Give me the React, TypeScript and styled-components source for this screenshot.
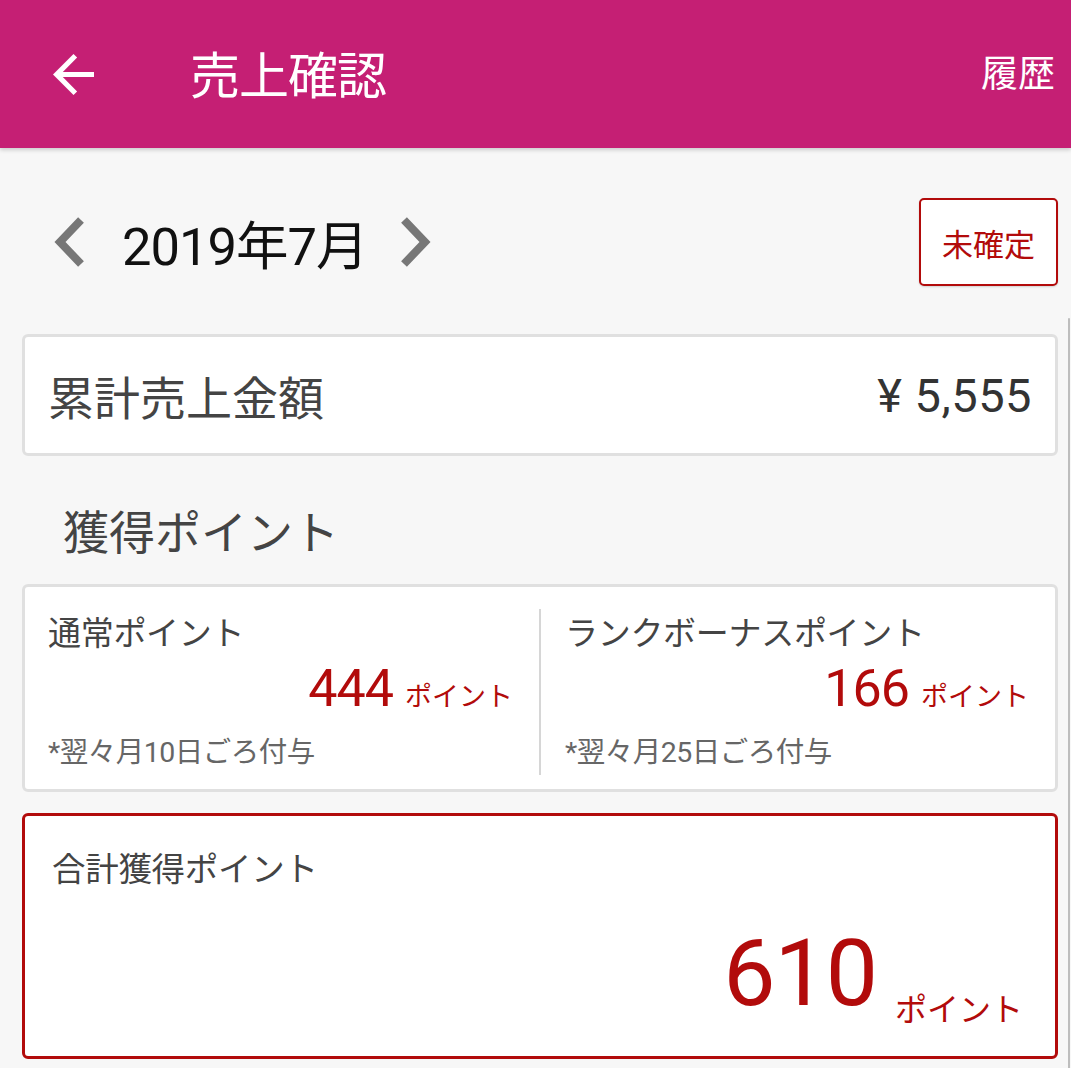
import React from "react";
import styled, { createGlobalStyle } from "styled-components";

const Global = createGlobalStyle`
  html, body { margin: 0; padding: 0; background: #f7f7f7; }
  body { font-family: Roboto, "Noto Sans CJK JP", sans-serif; }
  * { box-sizing: border-box; }
`;

const RED = "#b20b0b";

const Page = styled.div`
  width: 1071px;
  height: 1068px;
  overflow: hidden;
  background: #f7f7f7;
  position: relative;
`;

const Header = styled.header`
  height: 148px;
  background: #c51f74;
  display: flex;
  align-items: center;
  padding: 0 16px 0 53px;
  color: #fff;
  box-shadow: 0 2px 4px rgba(0, 0, 0, 0.18);
  position: relative;
`;

const BackIcon = styled.svg`
  width: 41px;
  height: 41px;
  flex: none;
  margin-bottom: 0;
`;

const Title = styled.h1`
  margin: 0 0 4px 96px;
  font-size: 50px;
  font-weight: 400;
  flex: 1;
  letter-spacing: -1px;
`;

const HeaderAction = styled.span`
  font-size: 37px;
  margin-bottom: 6px;
`;

const Content = styled.main`
  padding: 50px 13px 0 22px;
  display: flex;
  flex-direction: column;
`;

const DateRow = styled.div`
  display: flex;
  align-items: center;
  height: 88px;
`;

const Chevron = styled.svg<{ $gap: number }>`
  width: 36px;
  height: 52px;
  flex: none;
  margin-left: ${(p) => p.$gap}px;
  filter: blur(0.6px);
`;

const MonthLabel = styled.span`
  font-size: 52.5px;
  color: #111;
  margin-left: 35px;
  letter-spacing: -1px;
`;

const Spacer = styled.div`
  flex: 1;
`;

const StatusButton = styled.div`
  width: 139px;
  height: 88px;
  border: 2px solid ${RED};
  border-radius: 5px;
  background: #fff;
  color: ${RED};
  font-size: 31px;
  display: flex;
  align-items: center;
  justify-content: center;
  box-shadow: 0 1px 2px rgba(0, 0, 0, 0.15);
`;

const Card = styled.section<{ $accent?: boolean }>`
  background: #fff;
  border: 3px solid ${(p) => (p.$accent ? RED : "#e0e0e0")};
  border-radius: 6px;
`;

const TotalCard = styled(Card)`
  margin-top: 48px;
  height: 122px;
  display: flex;
  align-items: center;
  justify-content: space-between;
  padding: 0 23px 0 23px;
`;

const TotalLabel = styled.span`
  font-size: 46px;
  color: #444;
  letter-spacing: 0px;
`;

const TotalValue = styled.span`
  font-size: 47px;
  color: #333;
  letter-spacing: 0.5px;
`;

const SectionTitle = styled.h2`
  margin: 46px 0 20px 41px;
  font-size: 46px;
  font-weight: 400;
  color: #444;
  height: 62px;
  line-height: 62px;
`;

const PointsCard = styled(Card)`
  height: 208px;
  display: grid;
  grid-template-columns: 1fr 2px 1fr;
  align-items: stretch;
  padding: 22px 0;
`;

const Divider = styled.div`
  background: #d6d6d6;
`;

const PointCol = styled.div<{ $left?: boolean }>`
  display: flex;
  flex-direction: column;
  padding: 0 26px 0 ${(p) => (p.$left ? "23px" : "24px")};
`;

const PointLabel = styled.span`
  font-size: 33px;
  color: #444;
  line-height: 50px;
  letter-spacing: -0.3px;
`;

const ValueRow = styled.div<{ $lh: number }>`
  text-align: right;
  color: ${RED};
  line-height: ${(p) => p.$lh}px;
  white-space: nowrap;
`;

const BigNum = styled.span<{ $size: number }>`
  font-size: ${(p) => p.$size}px;
  letter-spacing: -1px;
`;

const Unit = styled.span<{ $size: number; $gap: number; $drop?: number }>`
  font-size: ${(p) => p.$size}px;
  margin-left: ${(p) => p.$gap}px;
  vertical-align: ${(p) => -(p.$drop || 0)}px;
`;

const Note = styled.span`
  font-size: 28.5px;
  color: #666;
  line-height: 44px;
  letter-spacing: -0.5px;
`;

const GrandCard = styled(Card)`
  margin-top: 21px;
  height: 246px;
  display: flex;
  flex-direction: column;
  padding: 30px 32px 0 27px;
`;

const GrandLabel = styled.span`
  font-size: 33.5px;
  color: #444;
  line-height: 48px;
  letter-spacing: -0.3px;
`;

const ScrollHint = styled.div`
  position: absolute;
  right: 1px;
  top: 318px;
  width: 2px;
  height: 760px;
  background: #bdbdbd;
  border-radius: 2px;
`;

export default function App() {
  return (
    <Page>
      <Global />
      <Header>
        <BackIcon viewBox="4 4 16 16">
          <path fill="#fff" d="M20 11H7.83l5.59-5.59L12 4l-8 8 8 8 1.41-1.41L7.83 13H20v-2z" />
        </BackIcon>
        <Title>売上確認</Title>
        <HeaderAction>履歴</HeaderAction>
      </Header>
      <Content>
        <DateRow>
          <Chevron $gap={29} viewBox="0 0 36 52">
            <path d="M30 4 L9 26 L30 48" fill="none" stroke="#777" strokeWidth="8" />
          </Chevron>
          <MonthLabel>2019年7月</MonthLabel>
          <Chevron $gap={30} viewBox="0 0 36 52">
            <path d="M6 4 L27 26 L6 48" fill="none" stroke="#777" strokeWidth="8" />
          </Chevron>
          <Spacer />
          <StatusButton>未確定</StatusButton>
        </DateRow>
        <TotalCard>
          <TotalLabel>累計売上金額</TotalLabel>
          <TotalValue>¥ 5,555</TotalValue>
        </TotalCard>
        <SectionTitle>獲得ポイント</SectionTitle>
        <PointsCard>
          <PointCol $left>
            <PointLabel>通常ポイント</PointLabel>
            <ValueRow $lh={60}>
              <BigNum $size={52}>444</BigNum>
              <Unit $size={27} $gap={12}>ポイント</Unit>
            </ValueRow>
            <Note>*翌々月10日ごろ付与</Note>
          </PointCol>
          <Divider />
          <PointCol>
            <PointLabel>ランクボーナスポイント</PointLabel>
            <ValueRow $lh={60}>
              <BigNum $size={52}>166</BigNum>
              <Unit $size={27} $gap={12}>ポイント</Unit>
            </ValueRow>
            <Note>*翌々月25日ごろ付与</Note>
          </PointCol>
        </PointsCard>
        <GrandCard $accent>
          <GrandLabel>合計獲得ポイント</GrandLabel>
          <ValueRow $lh={100} style={{ marginTop: 30 }}>
            <BigNum $size={93}>610</BigNum>
            <Unit $size={32} $gap={18} $drop={16}>ポイント</Unit>
          </ValueRow>
        </GrandCard>
      </Content>
      <ScrollHint />
    </Page>
  );
}
